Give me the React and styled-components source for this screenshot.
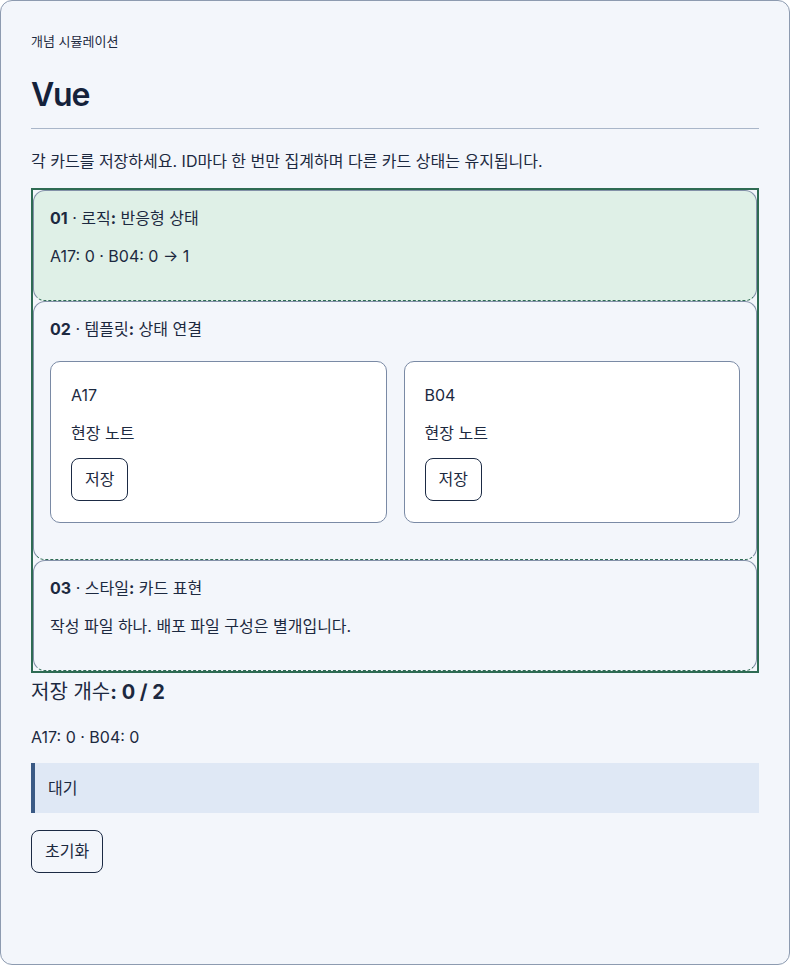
import React from 'react';
import styled, { createGlobalStyle } from 'styled-components';

const GlobalStyle = createGlobalStyle`
  html, body {
    margin: 0;
    background: #ffffff;
  }

  body {
    font-family: Inter, "Noto Sans CJK KR", sans-serif;
    color: #1c2940;
  }

  * {
    box-sizing: border-box;
  }
`;

const cards = [
  { id: 'A17', note: '현장 노트' },
  { id: 'B04', note: '현장 노트' },
];

export default function App() {
  return (
    <>
      <GlobalStyle />
      <Frame>
        <Eyebrow>개념 시뮬레이션</Eyebrow>
        <Title>Vue</Title>
        <Rule />
        <Lead>각 카드를 저장하세요. ID마다 한 번만 집계하며 다른 카드 상태는 유지됩니다.</Lead>

        <Stage>
          <Card $tone='#dff0e7'>
            <CardTitle>
              <b>01</b> · 로직<b>:</b> 반응형 상태
            </CardTitle>
            <Text>A17: 0 · B04: 0 → 1</Text>
          </Card>

          <Card>
            <CardTitle>
              <b>02</b> · 템플릿<b>:</b> 상태 연결
            </CardTitle>
            <SlotGrid>
              {cards.map(c => (
                <Slot key={c.id}>
                  <SlotId>{c.id}</SlotId>
                  <SlotNote>{c.note}</SlotNote>
                  <Button>저장</Button>
                </Slot>
              ))}
            </SlotGrid>
          </Card>

          <Card>
            <CardTitle>
              <b>03</b> · 스타일<b>:</b> 카드 표현
            </CardTitle>
            <Text>작성 파일 하나. 배포 파일 구성은 별개입니다.</Text>
          </Card>
        </Stage>

        <Summary>
          저장 개수<b>: 0 / 2</b>
        </Summary>
        <Counts>A17: 0 · B04: 0</Counts>
        <Status>대기</Status>
        <ResetButton>초기화</ResetButton>
      </Frame>
    </>
  );
}

const Frame = styled.div`
  min-height: 100vh;
  padding: 32px 30px;
  background: #f3f6fb;
  border: 1px solid #8d9bb0;
  border-radius: 12px;
`;

const Eyebrow = styled.div`
  font-size: 13px;
  line-height: 17px;
`;

const Title = styled.h1`
  margin: 26px 0 14px;
  font-size: 32px;
  line-height: 38px;
  font-weight: 600;
  letter-spacing: -1.2px;
  color: #15223b;
`;

const Rule = styled.hr`
  margin: 0;
  border: 0;
  border-top: 1px solid #a9b6c9;
`;

const Lead = styled.p`
  margin: 20px 0 15px;
  font-size: 16px;
  line-height: 24px;
`;

const Stage = styled.div`
  border: 2px solid #2e6b53;
`;

const Card = styled.section`
  padding: 15px 16px 16px;
  background: ${p => p.$tone || '#f3f6fb'};
  border: 1px solid #8391a8;
  border-bottom: 1px dashed #2e6b53;
  border-radius: 12px;
`;

const CardTitle = styled.div`
  margin-bottom: 14px;
  font-size: 16px;
  line-height: 24px;

  b {
    font-weight: 700;
  }
`;

const Text = styled.p`
  margin: 0 0 16px;
  font-size: 16px;
  line-height: 24px;
`;

const SlotGrid = styled.div`
  display: grid;
  grid-template-columns: 1fr 1fr;
  gap: 17px;
  margin: 20px 0 20px;
`;

const Slot = styled.div`
  padding: 21px 20px 21px;
  background: #ffffff;
  border: 1px solid #7a8aa5;
  border-radius: 10px;
`;

const SlotId = styled.div`
  margin-bottom: 14px;
  font-size: 16px;
  line-height: 24px;
`;

const SlotNote = styled.div`
  margin-bottom: 13px;
  font-size: 16px;
  line-height: 24px;
`;

const Button = styled.button`
  display: block;
  padding: 9px 13px;
  font-family: inherit;
  font-size: 16px;
  line-height: 23px;
  color: #1c2940;
  background: transparent;
  border: 1px solid #1b2a44;
  border-radius: 8px;
`;

const Summary = styled.h2`
  margin: 4px 0 0;
  font-size: 20px;
  line-height: 30px;
  font-weight: 400;

  b {
    font-weight: 700;
  }
`;

const Counts = styled.p`
  margin: 18px 0 0;
  font-size: 16px;
  line-height: 24px;
`;

const Status = styled.div`
  margin-top: 14px;
  padding: 13px 16px 13px 13px;
  font-size: 16px;
  line-height: 24px;
  background: #dfe8f5;
  border-left: 4px solid #3a5a85;
`;

const ResetButton = styled(Button)`
  margin-top: 17px;
`;
